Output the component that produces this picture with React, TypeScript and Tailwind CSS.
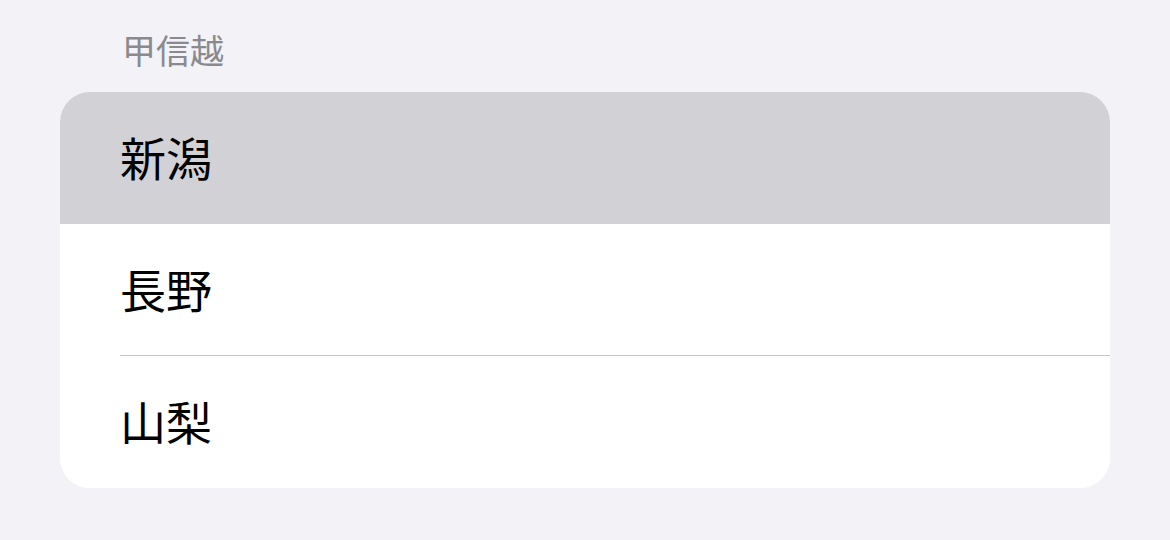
import * as React from "react"

interface Row {
  label: string
  selected?: boolean
}

const rows: Row[] = [
  { label: "新潟", selected: true },
  { label: "長野" },
  { label: "山梨" },
]

const font = { fontFamily: '"Noto Sans CJK JP", "Noto Sans", sans-serif' }

export default function App() {
  return (
    <div
      className="w-full h-[540px] bg-[#f2f2f7] px-[60px] overflow-hidden"
      style={font}
    >
      <div className="h-[92px] pl-[62px] pt-[30px] text-[34px] leading-[40px] text-[#8a8a8e]">
        甲信越
      </div>

      <div className="rounded-[30px] bg-white overflow-hidden">
        {rows.map((row, i) => (
          <div
            key={row.label}
            className={
              row.selected ? "pl-[60px] bg-[#d1d1d6]" : "pl-[60px] bg-white"
            }
          >
            <div
              className={
                i > 0 && i < rows.length - 1
                  ? "h-[132px] flex items-center border-b border-[#c6c6c8]"
                  : "h-[132px] flex items-center"
              }
            >
              <span className="mb-[4px] text-[46px] leading-none text-black">
                {row.label}
              </span>
            </div>
          </div>
        ))}
      </div>
    </div>
  )
}
